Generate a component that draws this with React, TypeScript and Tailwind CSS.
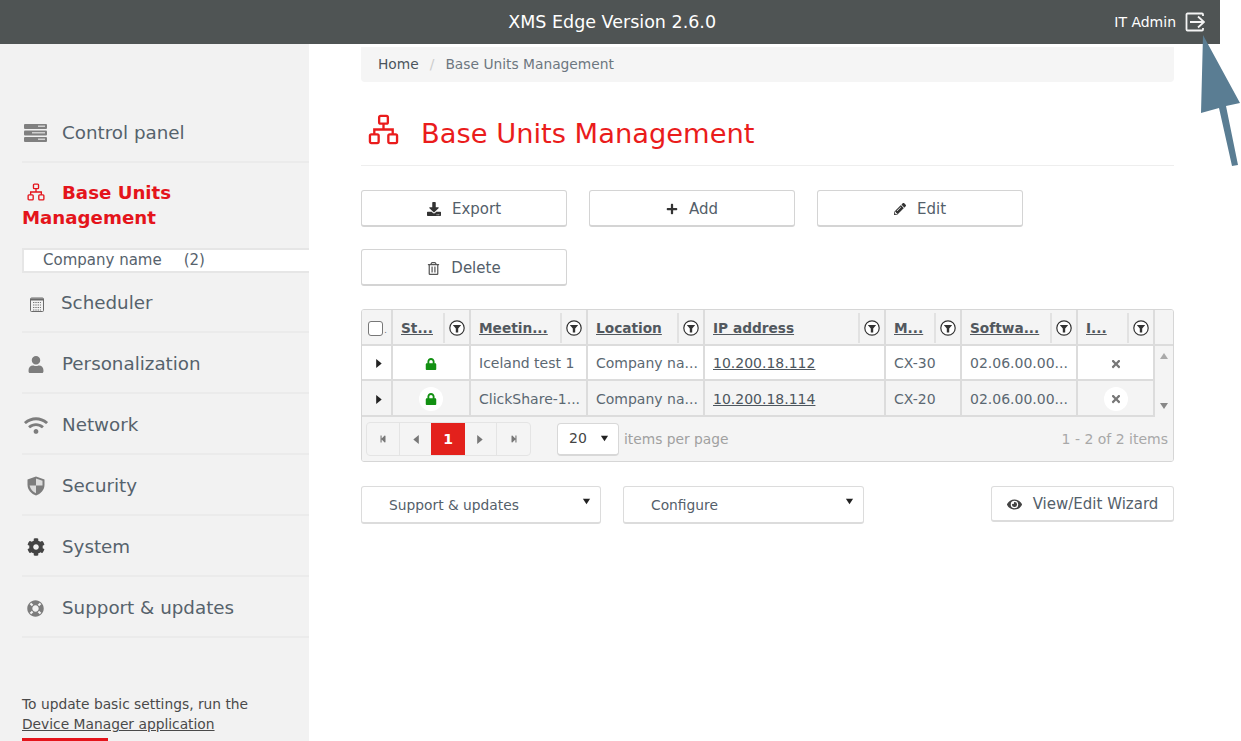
import React from 'react';
import { FaCog, FaDownload, FaEye, FaLifeRing, FaLock, FaPencilAlt, FaPlus, FaRegTrashAlt, FaStepBackward, FaStepForward, FaTimes, FaUser, FaWifi } from 'react-icons/fa';

const SitemapIcon = ({ className }: { className?: string }) => (
  <svg viewBox="0 0 32 32" className={className} fill="none" stroke="currentColor" strokeWidth="2.4">
    <rect x="11.5" y="2" width="9" height="8" rx="1.5" />
    <path d="M16 10v6M6.5 21v-5h19v5" />
    <rect x="2" y="21" width="9" height="9" rx="1.5" />
    <rect x="21" y="21" width="9" height="9" rx="1.5" />
  </svg>
);

const ServerIcon = () => (
  <svg viewBox="0 0 23 18" className="h-[18px] w-[23px]">
    <rect x="0" y="0" width="23" height="5" rx="1" fill="#808080" />
    <rect x="0" y="6.500" width="23" height="5" rx="1" fill="#808080" />
    <rect x="0" y="13" width="23" height="5" rx="1" fill="#808080" />
    <rect x="14" y="1.500" width="7" height="1.500" fill="#d0d0d0" />
    <rect x="8" y="8" width="13" height="1.500" fill="#d0d0d0" />
    <rect x="14" y="14.500" width="7" height="1.500" fill="#d0d0d0" />
  </svg>
);

const ShieldIcon = () => (
  <svg viewBox="0 0 18 20" className="h-[20px] w-[18px]">
    <path d="M9 0.500 17.500 3.500V9C17.500 14 13.500 18 9 19.500 4.500 18 0.500 14 0.500 9V3.500Z" fill="#7d7d7d" />
    <path d="M9 2.500 15.500 4.800V9.500H9Z" fill="#dcdcdc" />
    <path d="M9 9.500V17.300C6 16 3.200 13 2.600 9.500Z" fill="#dcdcdc" />
  </svg>
);

const CalendarIcon = () => (
  <svg viewBox="0 0 14 15" className="h-[15px] w-[14px]">
    <rect x="0.5" y="1" width="13" height="13.5" rx="1" fill="#f2f2f2" stroke="#6b6b6b" />
    <rect x="1" y="1.5" width="12" height="2" fill="#6b6b6b" />
    <path d="M3 5.5h8M3 8h8M3 10.500h8M3 13h8" stroke="#777" strokeWidth="1.2" strokeDasharray="1.400 0.900" />
  </svg>
);

const FilterIcon = () => (
  <svg viewBox="0 0 16 16" className="h-4 w-4 shrink-0">
    <circle cx="8" cy="8" r="7.200" fill="#fff" stroke="#333" strokeWidth="1.200" />
    <path d="M3.800 5h8.400L9.200 8.500V12.500H6.800V8.500Z" fill="#333" />
  </svg>
);

const LogoutIcon = () => (
  <svg viewBox="0 0 20 20" className="h-5 w-5" fill="none" stroke="#f4f4f4" strokeWidth="1.800">
    <path d="M18 4V2.500a1 1 0 0 0-1-1H2.500a1 1 0 0 0-1 1v15a1 1 0 0 0 1 1H17a1 1 0 0 0 1-1V16" />
    <path d="M5 10h14M13 4.500l6 5.500-6 5.500" />
  </svg>
);

const Caret = ({ dir = 'right', className = '' }: { dir?: 'right' | 'left' | 'down' | 'up'; className?: string }) => {
  const points = { right: '2,1 7,5 2,9', left: '8,1 3,5 8,9', down: '1,2 9,2 5,8', up: '1,8 9,8 5,2' }[dir];
  return (
    <svg viewBox="0 0 10 10" className={className} fill="currentColor">
      <polygon points={points} />
    </svg>
  );
};

const navItems = [
  { label: 'Personalization', icon: <FaUser className="h-[17px] w-[18px]" /> },
  { label: 'Network', icon: <FaWifi className="-ml-[3px] h-[19px] w-[24px]" /> },
  { label: 'Security', icon: <ShieldIcon /> },
  { label: 'System', icon: <FaCog className="h-[18px] w-[18px] text-[#444]" /> },
  { label: 'Support & updates', icon: <FaLifeRing className="h-[17px] w-[17px]" /> },
];

const Sidebar = () => (
  <aside className="flex w-[309px] shrink-0 flex-col bg-[#f2f2f2] pl-[22px] pt-[64px] text-[18.3px] text-[#56626c]">
    <div className="flex h-[55px] items-center border-b-2 border-[#ebebeb] pb-[4px]">
      <span className="flex w-[40px] pl-[2px]"><ServerIcon /></span>
      <span>Control panel</span>
    </div>
    <div className="pt-[17px] pb-[18px] text-[18.2px] font-bold leading-[25px] text-[#e4141b]">
      <SitemapIcon className="ml-[4px] mr-[16px] inline-block h-[18px] w-[20px] align-[-2px]" />
      Base Units<br />Management
    </div>
    <div className="flex h-[25px] items-center gap-[22px] border-2 border-r-0 border-[#e6e6e6] bg-white pl-[19px] text-[15px]">
      <span>Company name</span><span>(2)</span>
    </div>
    <div className="flex h-[60px] items-center border-b-2 border-[#ebebeb] pt-[2px]">
      <span className="flex w-[39px] pl-[8px] pt-[2px]"><CalendarIcon /></span>
      <span>Scheduler</span>
    </div>
    {navItems.map((item) => (
      <div key={item.label} className="flex h-[61px] items-center border-b-2 border-[#ebebeb] pt-[3px]">
        <span className="flex w-[40px] pl-[5px] text-[#7d7d7d]">{item.icon}</span>
        <span>{item.label}</span>
      </div>
    ))}
    <div className="mt-[56px] text-[13.8px] leading-[20px] text-[#4a4a4a]">
      To update basic settings, run the<br />
      <span className="underline">Device Manager application</span>
    </div>
    <div className="mt-[4px] h-[3px] w-[86px] bg-[#e4141b]" />
  </aside>
);

const PageButton = ({ children }: { children: React.ReactNode }) => (
  <button className="flex h-[37px] w-[206px] items-center justify-center gap-[11px] rounded-[3px] border border-b-2 border-[#d4d4d4] bg-white pt-[2px] text-[15px] text-[#54606a]">
    {children}
  </button>
);

const columns = ['St...', 'Meetin...', 'Location', 'IP address', 'M...', 'Softwa...', 'I...'];
const rows = [
  { name: 'Iceland test 1', ip: '10.200.18.112', model: 'CX-30', even: false },
  { name: 'ClickShare-1...', ip: '10.200.18.114', model: 'CX-20', even: true },
];

const DataGrid = () => (
  <div className="mt-[23px] overflow-hidden rounded-[3px] border border-[#d6d6d6] text-[14px] text-[#5b6872]">
    <div className="grid grid-cols-[31px_78px_117px_117px_181px_76px_116px_77px_18px] grid-rows-[36px_35px_36px]">
      <div className="flex items-center justify-center gap-px border-b-2 border-r-2 border-[#dcdcdc] bg-[#f4f4f4] pl-[2px] pt-[2px]">
        <span className="h-[15px] w-[15px] rounded-[3px] border border-[#777] bg-white" />
        <span className="self-end pb-[9px] text-[8px] leading-none">.</span>
      </div>
      {columns.map((col) => (
        <div key={col} className="flex items-center border-b-2 border-r-2 border-[#dcdcdc] bg-[#f4f4f4] pt-[2px]">
          <span className="flex-1 whitespace-nowrap pl-[8px] text-[13.7px] font-bold text-[#52585e] underline">{col}</span>
          <span className="flex h-[30px] w-[26px] items-center justify-center border-l-2 border-[#e2e2e2]"><FilterIcon /></span>
        </div>
      ))}
      <div className="row-span-3 flex flex-col items-center bg-[#f4f4f4]">
        <div className="h-[36px] w-full border-b-2 border-[#dcdcdc]" />
        <Caret dir="up" className="mt-[5px] h-[10px] w-[10px] text-[#aaa]" />
        <Caret dir="down" className="mt-auto mb-[6px] h-[10px] w-[10px] text-[#888]" />
      </div>
      {rows.map((row) => {
        const cell = `flex items-center border-b-2 border-r-2 border-[#dcdcdc] pt-[2px] ${row.even ? 'bg-[#f4f4f4]' : 'bg-white'}`;
        return (
          <React.Fragment key={row.ip}>
            <div className={`${cell} justify-center pl-[5px]`}><Caret className="h-[11px] w-[11px] text-[#222]" /></div>
            <div className={`${cell} justify-center`}>
              <span className={`flex h-6 w-6 items-center justify-center rounded-full ${row.even ? 'bg-white' : ''}`}><FaLock className="h-[12px] w-[12px] text-[#129012]" /></span>
            </div>
            <div className={`${cell} whitespace-nowrap pl-[8px]`}>{row.name}</div>
            <div className={`${cell} whitespace-nowrap pl-[8px]`}>Company na...</div>
            <div className={`${cell} pl-[8px] text-[#4d565e] underline`}>{row.ip}</div>
            <div className={`${cell} pl-[8px]`}>{row.model}</div>
            <div className={`${cell} whitespace-nowrap pl-[8px]`}>02.06.00.00...</div>
            <div className={`${cell} justify-center`}>
              <span className={`flex h-6 w-6 items-center justify-center rounded-full ${row.even ? 'bg-white' : ''}`}><FaTimes className="h-[12px] w-[12px] text-[#777]" /></span>
            </div>
          </React.Fragment>
        );
      })}
    </div>
    <div className="flex h-[44px] items-center bg-[#f4f4f4] pl-[4px] pr-[5px]">
      <div className="flex h-[34px] overflow-hidden rounded-[4px] border border-[#e4e4e4] text-[#777]">
        <span className="flex w-[33px] items-center justify-center border-r border-[#e4e4e4]"><FaStepBackward className="h-[8px] w-[8px]" /></span>
        <span className="flex w-[31px] items-center justify-center"><Caret dir="left" className="h-[11px] w-[11px]" /></span>
        <span className="flex w-[34px] items-center justify-center bg-[#e3211c] font-bold text-white">1</span>
        <span className="flex w-[32px] items-center justify-center border-r border-[#e4e4e4]"><Caret className="h-[11px] w-[11px]" /></span>
        <span className="flex w-[33px] items-center justify-center"><FaStepForward className="h-[8px] w-[8px]" /></span>
      </div>
      <div className="ml-[26px] flex h-[33px] w-[62px] items-center justify-between rounded-[4px] border border-b-2 border-[#d8d8d8] bg-white pl-[11px] pr-[9px] text-[#444]">
        <span>20</span>
        <Caret dir="down" className="h-[9px] w-[9px] text-[#222]" />
      </div>
      <span className="ml-[5px] text-[13.8px] text-[#a0a0a0]">items per page</span>
      <span className="ml-auto text-[#a8a8a8]">1 - 2 of 2 items</span>
    </div>
  </div>
);

const SelectButton = ({ label, width }: { label: string; width: string }) => (
  <div className={`${width} flex h-[38px] items-start justify-between rounded-[3px] border border-b-2 border-[#dcdcdc] bg-white pl-[27px] pr-[9px] text-[13.8px] text-[#54606a]`}>
    <span className="self-center pt-[2px]">{label}</span>
    <Caret dir="down" className="mt-[10px] h-[9px] w-[9px] text-[#222]" />
  </div>
);

export default function App() {
  return (
    <div className="relative flex h-[741px] w-[1241px] flex-col overflow-hidden bg-white font-['DejaVu_Sans',sans-serif]">
      <header className="flex h-[44px] w-[1220px] shrink-0 items-center bg-[#4f5454] text-white">
        <div className="flex-1 pl-[110px] text-center text-[17.5px]">XMS Edge Version 2.6.0</div>
        <div className="flex items-center gap-[9px] pr-[15px] text-[14px]">
          <span>IT Admin</span>
          <LogoutIcon />
        </div>
      </header>
      <div className="flex min-h-0 flex-1">
        <Sidebar />
        <main className="ml-[52px] w-[813px]">
          <div className="mt-[3px] flex h-[35px] items-center gap-[11px] rounded-b-[4px] bg-[#f5f5f5] pl-[17px] text-[13.8px] text-[#6d7780]">
            <span className="text-[#4b545c]">Home</span>
            <span className="text-[#cccccc]">/</span>
            <span>Base Units Management</span>
          </div>
          <div className="flex h-[84px] items-center gap-[22px] border-b border-[#eeeeee] pl-[7px] pt-[22px] text-[27.3px] text-[#ea1c1c]">
            <SitemapIcon className="-mt-[10px] h-[31px] w-[31px]" />
            <h1>Base Units Management</h1>
          </div>
          <div className="mt-[24px] flex flex-wrap gap-x-[22px] gap-y-[22px]">
            <PageButton><FaDownload className="h-[14px] w-[14px] text-[#333]" />Export</PageButton>
            <PageButton><FaPlus className="h-[12px] w-[12px] text-[#333]" />Add</PageButton>
            <PageButton><FaPencilAlt className="h-[12px] w-[12px] text-[#333]" />Edit</PageButton>
            <PageButton><FaRegTrashAlt className="h-[13px] w-[13px] text-[#555]" />Delete</PageButton>
          </div>
          <DataGrid />
          <div className="mt-[24px] flex items-start gap-[22px]">
            <SelectButton label="Support & updates" width="w-[240px]" />
            <SelectButton label="Configure" width="w-[241px]" />
            <button className="ml-auto flex h-[36px] w-[183px] items-center justify-center gap-[11px] rounded-[3px] border border-b-2 border-[#dcdcdc] bg-white pt-[2px] text-[15px] text-[#54606a]">
              <FaEye className="h-[15px] w-[15px] text-[#444]" />View/Edit Wizard
            </button>
          </div>
        </main>
      </div>
      {/* annotation arrow over the logout icon */}
      <svg className="absolute left-0 top-0" width="1241" height="741" viewBox="0 0 1241 741">
        <polygon points="1203,35 1240,103 1226,106 1238,165 1232,166 1219,108 1201,113" fill="#5a7d93" />
      </svg>
    </div>
  );
}
